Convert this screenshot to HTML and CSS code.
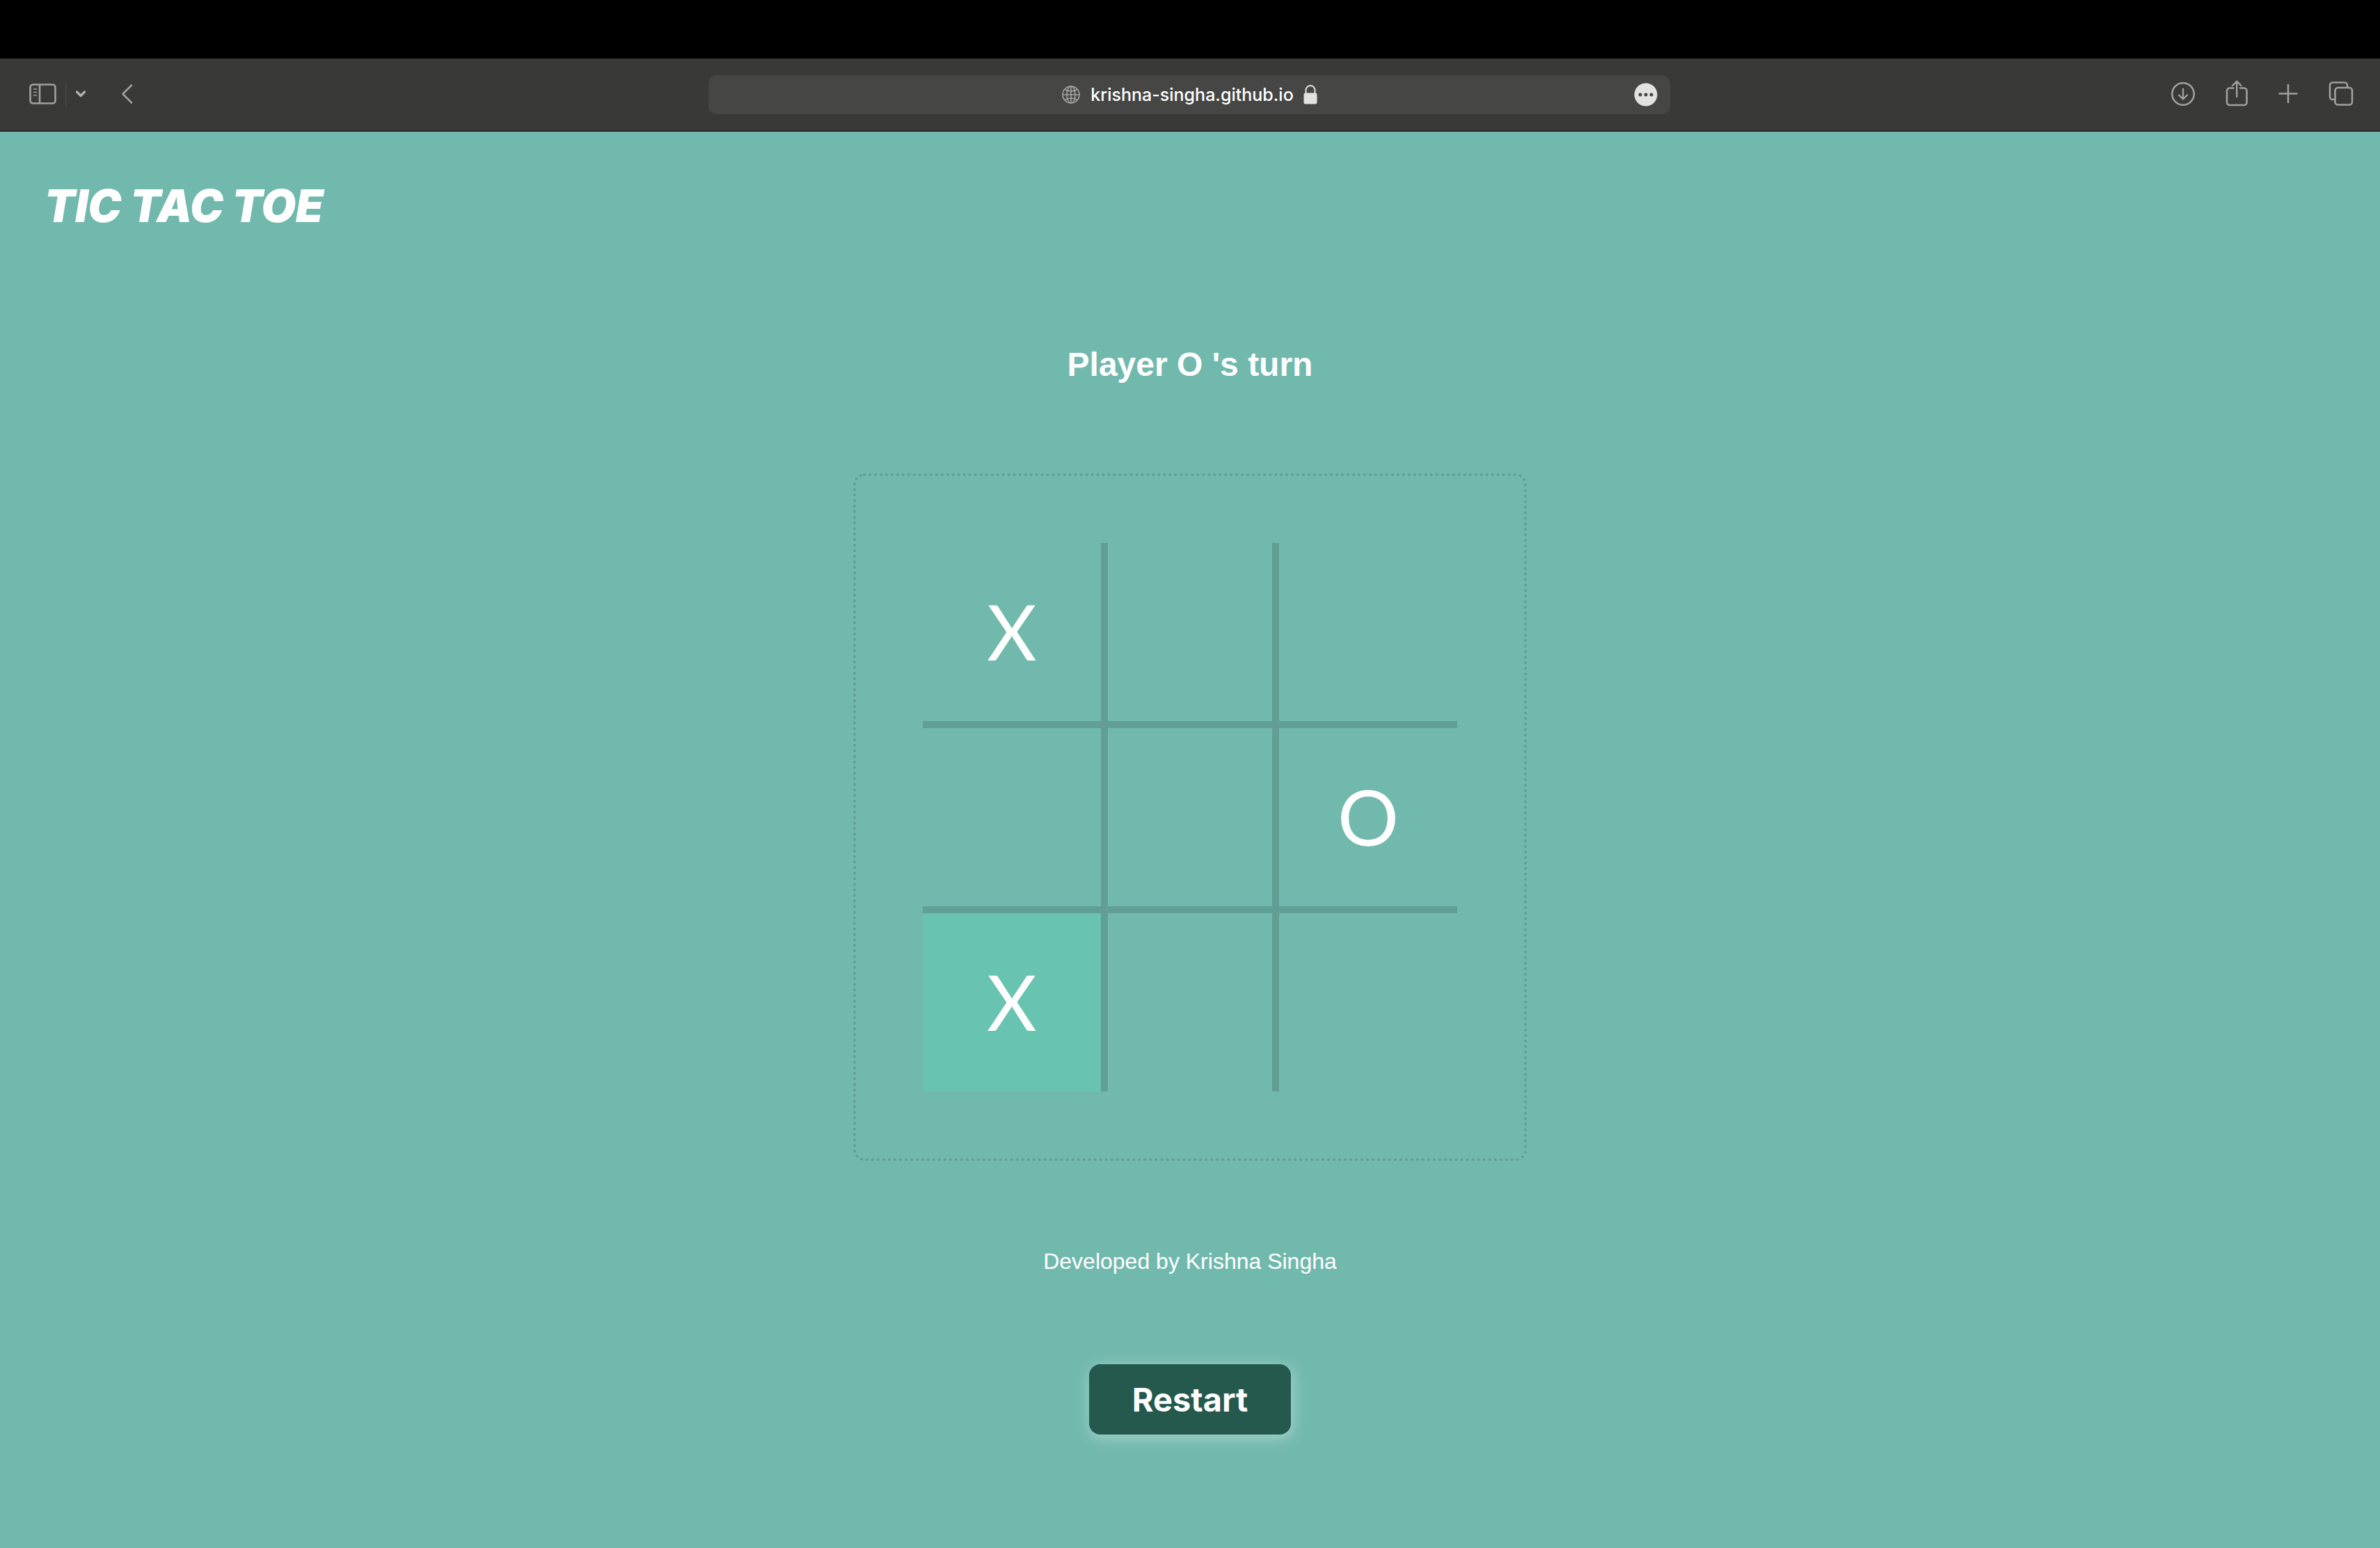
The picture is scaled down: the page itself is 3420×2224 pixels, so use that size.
FILE: index.html
```html
<!DOCTYPE html>
<html lang="en">
<head>
<meta charset="utf-8">
<title>Tic Tac Toe</title>
<link rel="stylesheet" href="styles.css">
</head>
<body>
<div class="menu-strip"></div>
<nav class="toolbar" aria-label="Browser toolbar">
  <div class="tools tools-left">
    <button class="tool" aria-label="Sidebar"><svg width="40" height="32" viewBox="0 0 40 32"><rect x="1.5" y="2.5" width="36" height="27" rx="4"/><path d="M15 3v26"/><path class="fine" d="M6.5 9h4M6.5 13.500h4M6.500 18h4"/></svg></button>
    <span class="divider"></span>
    <button class="tool" aria-label="Tab groups"><svg class="bright" width="16" height="12" viewBox="0 0 16 12"><path d="M2.500 3 8 8.500 13.500 3"/></svg></button>
    <button class="tool back" aria-label="Back"><svg width="18" height="32" viewBox="0 0 18 32"><path d="M15 3.500 2.500 16 15 28.500"/></svg></button>
  </div>
  <div class="address">
    <span class="address-text">
      <svg class="globe" width="28" height="28" viewBox="0 0 28 28"><circle cx="14" cy="14" r="12"/><ellipse cx="14" cy="14" rx="6" ry="12"/><path d="M14 2v24M2 14h24M5 6.500q9 5 18 0M5 21.500q9-5 18 0"/></svg>
      <span>krishna-singha.github.io</span>
      <svg class="lock" width="20" height="28" viewBox="0 0 20 28"><rect x="0.500" y="11.500" width="19" height="16" rx="2.500"/><path d="M3.500 13V7.500a6.500 6.500 0 0 1 13 0V13"/></svg>
    </span>
    <button class="tool more" aria-label="Page menu"><svg class="dots" width="34" height="34" viewBox="0 0 34 34"><circle class="disc" cx="17" cy="17" r="16.500"/><circle cx="9" cy="17" r="2.500"/><circle cx="17" cy="17" r="2.500"/><circle cx="25" cy="17" r="2.500"/></svg></button>
  </div>
  <div class="tools tools-right">
    <button class="tool" aria-label="Downloads"><svg width="34" height="40" viewBox="1 0 34 40"><circle cx="18" cy="21" r="15.700"/><path class="medium" d="M18 14v14M12 22.500l6 6 6-6"/></svg></button>
    <button class="tool" aria-label="Share"><svg width="32" height="40" viewBox="0 0 32 40"><path d="M11.500 12.500H6a4 4 0 0 0-4 4v16.500a4 4 0 0 0 4 4h20.500a4 4 0 0 0 4-4v-16.500a4 4 0 0 0-4-4H21"/><path class="medium" d="M16.200 25V3M10 9l6.200-6.200L22.400 9"/></svg></button>
    <button class="tool" aria-label="New tab"><svg width="28" height="40" viewBox="0 0 28 40"><path d="M14 8v25M1.500 20.500h25"/></svg></button>
    <button class="tool" aria-label="Tab overview"><svg width="36" height="40" viewBox="0 0 36 40"><rect x="9.500" y="12" width="24.500" height="24.500" rx="4"/><path d="M9 29H6a4 4 0 0 1-4-4V8.500a4 4 0 0 1 4-4h17a4 4 0 0 1 4 4v3"/></svg></button>
  </div>
</nav>
<div class="page">
  <header class="header"><h1 class="title">TIC TAC TOE</h1></header>
  <main class="game">
    <h2 class="status">Player O 's turn</h2>
    <div class="board">
      <button class="cell left upper">X</button>
      <button class="cell upper" aria-label="Empty"></button>
      <button class="cell right upper" aria-label="Empty"></button>
      <button class="cell left upper" aria-label="Empty"></button>
      <button class="cell upper" aria-label="Empty"></button>
      <button class="cell right upper">O</button>
      <button class="cell left active">X</button>
      <button class="cell" aria-label="Empty"></button>
      <button class="cell right" aria-label="Empty"></button>
    </div>
    <p class="credit">Developed by Krishna Singha</p>
    <button class="restart">Restart</button>
  </main>
</div>
</body>
</html>
```
FILE: styles.css
```css
* { box-sizing: border-box; }

body {
  margin: 0;
  min-height: 100vh;
  background: #72b9ad;
  color: #fff;
  font-family: "Liberation Sans", Arial, sans-serif;
}

button {
  margin: 0;
  padding: 0;
  border: 0;
  background: none;
  color: inherit;
  font: inherit;
  cursor: pointer;
}

.menu-strip { height: 84px; background: #000; }

/* Browser toolbar */
.toolbar {
  display: grid;
  grid-template-columns: 1fr minmax(0, 1382px) 1fr;
  align-items: center;
  height: 105px;
  padding: 0 38px 0 36px;
  background: #393937;
  border-bottom: 1px solid #000;
}

.tools { display: flex; align-items: center; }
.tools-left { padding: 0 0 2px 6px; }
.tools-right { justify-content: flex-end; gap: 44px; padding-bottom: 4px; }
.tool { display: flex; }

.tool svg {
  fill: none;
  stroke: #a0a09f;
  stroke-width: 2.6;
  stroke-linecap: round;
  stroke-linejoin: round;
}
.tool .fine { stroke-width: 1.6; }
.tool .medium { stroke-width: 2.4; }
.tool .bright { stroke: #b4b4b3; stroke-width: 3.2; }

.divider { width: 2px; height: 36px; margin: 0 12px; background: #454543; }
.back { margin-left: 50px; }

.address {
  display: grid;
  grid-template-columns: 1fr auto 1fr;
  align-items: center;
  height: 56px;
  padding: 0 18px;
  border-radius: 12px;
  background: #464645;
}
.address-text {
  grid-column: 2;
  display: flex;
  align-items: center;
  gap: 14px;
  font: 500 25px/32px Inter, sans-serif;
}
.globe { fill: none; stroke: #a5a5a4; stroke-width: 1.6; }
.lock { fill: #e2e2e2; }
.lock path { fill: none; stroke: #e2e2e2; stroke-width: 2; }
.more { justify-self: end; }
.tool .dots { fill: #464645; stroke: none; }
.tool .disc { fill: #e2e2e2; }

/* Game page */
.header { padding: 67px 64px 0; }
.title {
  margin: 0;
  font: italic 900 64px/80px Inter, sans-serif;
}

.game {
  display: flex;
  flex-direction: column;
  align-items: center;
  padding: 160px 32px 64px;
}
.status { margin: 0 0 128px; font-size: 48px; line-height: 56px; }

.board {
  display: grid;
  grid-template-columns: 266px 236px 266px;
  grid-template-rows: 266px 266px 256px;
  padding: 96px;
  border: 4px dotted #619e93;
  border-radius: 16px;
}
.cell {
  padding-bottom: 4px;
  border: 0 solid #619e93;
  font: 400 110px/132px Lato, sans-serif;
}
.left { border-right-width: 10px; }
.right { border-left-width: 10px; }
.upper { border-bottom-width: 10px; }
.active { background: #68c3b1; }

.credit { margin: 124px 0 128px; font-size: 32px; line-height: 40px; }

.restart {
  padding: 22px 62px;
  border-radius: 16px;
  background: #25594d;
  box-shadow: 2px 4px 20px rgba(255, 255, 255, 0.4);
  font: 700 47px/57px Inter, sans-serif;
}
```
